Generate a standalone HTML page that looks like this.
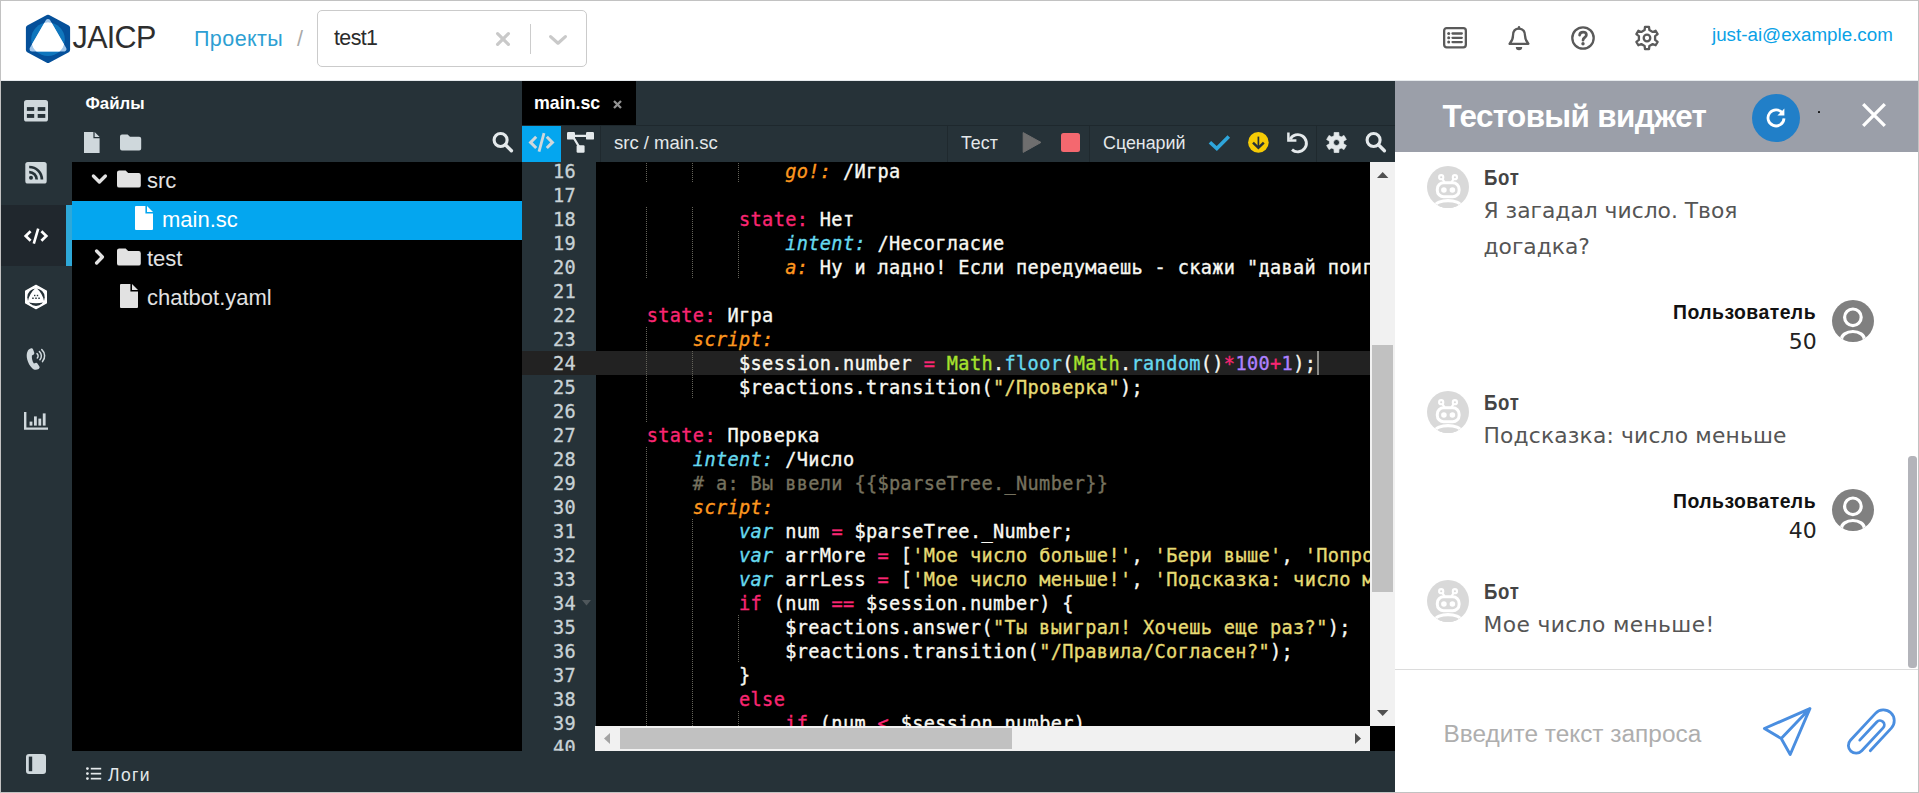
<!DOCTYPE html>
<html lang="ru">
<head>
<meta charset="utf-8">
<title>JAICP</title>
<style>
*{box-sizing:border-box;margin:0;padding:0}
html,body{width:1919px;height:793px;overflow:hidden;background:#fff}
body{position:relative;font-family:"Liberation Sans",sans-serif;color:#222}
.abs{position:absolute}
.t{position:absolute;white-space:nowrap;line-height:1}
svg{position:absolute;overflow:visible}
#frame{position:absolute;left:0;top:0;width:1919px;height:793px;border:1px solid #c2c2c2;pointer-events:none;z-index:50}
/* header */
#hdr{left:1px;top:1px;width:1917px;height:80px;background:#fff}
/* dark */
#dark{left:1px;top:81px;width:1394px;height:711px;background:#263238}
#navact{left:1px;top:205px;width:71px;height:61px;background:#20272d}
#navbar{left:66px;top:205px;width:6px;height:61px;background:#2ea8d8}
#tree{left:72px;top:162px;width:450px;height:589px;background:#000}
#sel{left:72px;top:201px;width:450px;height:39px;background:#04a6ef}
.tr{font-size:22px;color:#e2e2e2}
/* editor */
#tab{left:522px;top:81px;width:114px;height:44px;background:#000}
#tbline{left:522px;top:125px;width:873px;height:1px;background:#1e282d}
#codebtn{left:522px;top:126px;width:39px;height:36px;background:#04a6ef}
.sep{position:absolute;top:126px;width:1px;height:36px;background:#1f292e}
.tb{font-size:18px;color:#e4e8ea}
#code{left:596px;top:162px;width:774px;height:564px;background:#000;overflow:hidden}
#gut{left:522px;top:162px;width:74px;height:589px;background:#263238;overflow:hidden}
#vs{left:1370px;top:162px;width:25px;height:564px;background:#f1f1f1}
#vst{left:1372px;top:345px;width:21px;height:247px;background:#c1c1c1}
#hs{left:595px;top:726px;width:775px;height:25px;background:#f1f1f1}
#hst{left:620px;top:728px;width:392px;height:21px;background:#c1c1c1}
#corner{left:1370px;top:726px;width:25px;height:25px;background:#000}
/* widget */
#wh{left:1395px;top:81px;width:523px;height:71px;background:#9b9fa9}
#wb{left:1395px;top:152px;width:523px;height:640px;background:#fff}

.wname{font-size:18.6px;font-weight:700;color:#444;letter-spacing:.7px;transform:scaleY(1.145);transform-origin:0 84.6%}
.wtxt{font-family:"DejaVu Sans","Liberation Sans",sans-serif;font-size:21.8px;color:#555}
.wuser{font-size:19.4px;font-weight:700;color:#111;letter-spacing:.45px;transform:scaleY(1.045);transform-origin:0 84.6%}
.wnum{font-family:"DejaVu Sans","Liberation Sans",sans-serif;font-size:22px;color:#222}
/*EDCSS*/
.cl{position:absolute;left:4.5px;-webkit-text-stroke:.35px;margin-top:1px;letter-spacing:0.348px;white-space:pre;font-family:"DejaVu Sans Mono","Liberation Mono",monospace;font-size:18.6px;line-height:24px;height:24px;color:#f8f8f2}
.gn{position:absolute;right:20px;-webkit-text-stroke:.3px;margin-top:1px;letter-spacing:0.348px;white-space:pre;font-family:"DejaVu Sans Mono","Liberation Mono",monospace;font-size:18.6px;line-height:24px;height:24px;color:#c9d2d6}
.ig{position:absolute;width:1px;height:24px;background:repeating-linear-gradient(to bottom,#64635a 0,#64635a 1px,transparent 1px,transparent 2px)}
/*EDCSSEND*/
</style>
</head>
<body>
<div id="hdr" class="abs"></div>
<div id="dark" class="abs"></div>
<div class="abs" style="left:1px;top:80px;width:1917px;height:1px;background:#e6eaed"></div>

<svg class="abs" style="left:0;top:0" width="80" height="80" viewBox="0 0 80 80">
 <defs><clipPath id="lc"><circle cx="48" cy="39.3" r="16.8"/></clipPath></defs>
 <path d="M48 17.25 L67.6 27.650000000000002 L67.6 50.05 L48 60.45 L28.4 50.05 L28.4 27.650000000000002 Z" fill="#05509a" stroke="#05509a" stroke-width="5" stroke-linejoin="round"/>
 <circle cx="48" cy="39.3" r="16.8" fill="#0f76bd"/>
 <path d="M48 21.5 L63.9 49 L32.1 49 Z" fill="#a3c8ec" stroke="#a3c8ec" stroke-width="5" stroke-linejoin="round"/>
 <path d="M48 21.5 L63.9 49 L32.1 49 Z" fill="#fff" stroke="#fff" stroke-width="5" stroke-linejoin="round" clip-path="url(#lc)"/>
</svg>
<div class="t" style="left:72.6px;top:21.7px;font-size:30.5px;letter-spacing:-.7px;color:#2e2e2e">JAICP</div>
<div class="t" style="left:194px;top:29px;font-size:21.5px;letter-spacing:.42px;color:#2e9fd3">Проекты</div>
<div class="t" style="left:297px;top:29px;font-size:21.5px;color:#a9a9a9">/</div>
<div class="abs" style="left:317px;top:10px;width:270px;height:57px;border:1px solid #cbcbcb;border-radius:5px;background:#fff"></div>
<div class="t" style="left:334px;top:28px;font-size:21.4px;letter-spacing:-.6px;color:#2b2b2b">test1</div>
<svg style="left:496px;top:32px" width="14" height="14" viewBox="0 0 14 14"><path d="M1.6 1.6 L12.4 12.4 M12.4 1.6 L1.6 12.4" stroke="#c9c9c9" stroke-width="3.2" stroke-linecap="round" fill="none"/></svg>
<div class="abs" style="left:530px;top:24px;width:1px;height:30px;background:#cccccc"></div>
<svg style="left:549px;top:35px" width="18" height="10" viewBox="0 0 18 10"><path d="M1.6 1.6 L9 8.2 L16.4 1.6" stroke="#c9c9c9" stroke-width="3.2" stroke-linecap="round" stroke-linejoin="round" fill="none"/></svg>
<!-- right icons -->
<svg style="left:1443px;top:27px" width="24" height="22" viewBox="0 0 24 22" fill="none" stroke="#5a5a5a">
 <rect x="1.15" y="1.15" width="21.7" height="19.2" rx="2.5" stroke-width="2.3"/>
 <path d="M9.5 6.5H18.8M9.5 10.8H18.8M9.5 15.1H18.8" stroke-width="2.3" stroke-linecap="round"/>
 <circle cx="5.7" cy="6.5" r="1.5" fill="#5a5a5a" stroke="none"/><circle cx="5.7" cy="10.8" r="1.5" fill="#5a5a5a" stroke="none"/><circle cx="5.7" cy="15.1" r="1.5" fill="#5a5a5a" stroke="none"/>
</svg>
<svg style="left:1507px;top:25px" width="24" height="26" viewBox="0 0 24 26" fill="none" stroke="#5a5a5a">
 <path d="M12 2.2 V3.2" stroke-width="2.4" stroke-linecap="round"/>
 <path d="M12 3.6 C7.6 3.6 6 7 6 10.5 C6 15 4.6 16.6 2.6 18.8 H21.4 C19.4 16.6 18 15 18 10.5 C18 7 16.4 3.6 12 3.6 Z" stroke-width="2.3" stroke-linejoin="round"/>
 <path d="M8.8 22 A3.2 3.2 0 0 0 15.2 22 Z" fill="#5a5a5a" stroke="none"/>
</svg>
<svg style="left:1570px;top:25px" width="26" height="26" viewBox="0 0 26 26" fill="none" stroke="#5a5a5a">
 <circle cx="13" cy="13" r="10.7" stroke-width="2.3"/>
 <path d="M9.6 10.2 C9.8 8.2 11.2 7.2 13.1 7.2 C15 7.2 16.4 8.4 16.4 10 C16.4 12.4 13 12.4 13 15.2" stroke-width="2.7" stroke-linecap="round" stroke-linejoin="round"/>
 <circle cx="13" cy="18.7" r="1.7" fill="#5a5a5a" stroke="none"/>
</svg>
<svg style="left:1634px;top:25px" width="26" height="26" viewBox="0 0 26 26" fill="none" stroke="#5a5a5a">
 <path d="M10.60 5.05 L11.00 1.88 L15.00 1.88 L15.40 5.05 L18.68 6.95 L21.63 5.71 L23.63 9.17 L21.08 11.10 L21.08 14.90 L23.63 16.83 L21.63 20.29 L18.68 19.05 L15.40 20.95 L15.00 24.12 L11.00 24.12 L10.60 20.95 L7.32 19.05 L4.37 20.29 L2.37 16.83 L4.92 14.90 L4.92 11.10 L2.37 9.17 L4.37 5.71 L7.32 6.95 Z" stroke-width="2.3" stroke-linejoin="round"/>
 <circle cx="13" cy="13" r="3.3" stroke-width="2.3"/>
</svg>
<div class="t" style="left:1712px;top:25.5px;font-size:18.8px;color:#0aa1e6">just-ai@example.com</div>


<div id="navact" class="abs"></div><div id="navbar" class="abs"></div>
<!-- table icon -->
<svg style="left:24px;top:100px" width="24" height="22" viewBox="0 0 24 22"><rect x="0" y="0" width="24" height="21.6" rx="2.6" fill="#cfd8dc"/>
<g fill="#263238"><rect x="2.9" y="7.1" width="7.3" height="3.8"/><rect x="13.7" y="7.1" width="7.6" height="3.8"/><rect x="2.9" y="14" width="7.3" height="3.9"/><rect x="13.7" y="14" width="7.6" height="3.9"/></g></svg>
<!-- rss icon -->
<svg style="left:25px;top:162px" width="22" height="22" viewBox="0 0 22 22"><rect x="0.3" y="0" width="21.4" height="21.6" rx="2.6" fill="#cfd8dc"/>
<g fill="none" stroke="#263238" stroke-width="2.7" stroke-linecap="butt"><path d="M4.2 5 A12.6 12.6 0 0 1 16.9 17.6"/><path d="M4.2 10.2 A7.4 7.4 0 0 1 11.7 17.6"/></g><circle cx="6" cy="15.8" r="2" fill="#263238"/></svg>
<!-- code icon -->
<svg style="left:23px;top:227px" width="26" height="18" viewBox="0 0 26 18" fill="none" stroke="#fff" stroke-width="2.7" stroke-linejoin="miter"><path d="M7.6 4.2 L2.7 9 L7.6 13.8"/><path d="M18.4 4.2 L23.3 9 L18.4 13.8"/><path d="M15.2 1.6 L10.8 16.6" stroke-width="2.6"/></svg>
<!-- hex icon -->
<svg style="left:24px;top:284px" width="24" height="26" viewBox="0 0 24 26"><path d="M12 1.4 L22.3 7.2 L22.3 18.9 L12 24.6 L1.7 18.9 L1.7 7.2 Z" fill="#fff" stroke="#fff" stroke-width="1.4" stroke-linejoin="round"/>
<circle cx="12" cy="13.2" r="8.7" fill="#263238"/>
<path d="M12 5 Q17.6 10 19 17.4 Q12 19 5 17.4 Q6.4 10 12 5 Z" fill="#fff" stroke="#fff" stroke-width="2.2" stroke-linejoin="round"/>
<g fill="#263238"><rect x="10" y="10.8" width="1.4" height="1.4"/><rect x="12.8" y="10.8" width="1.4" height="1.4"/><rect x="8.2" y="13.5" width="1.5" height="1.5"/><rect x="11.25" y="13.5" width="1.5" height="1.5"/><rect x="14.3" y="13.5" width="1.5" height="1.5"/></g></svg>
<!-- phone icon -->
<svg style="left:23.8px;top:345.6px" width="22" height="25" viewBox="0 0 22 25"><path d="M6.6 2.6 C7.6 2 8.6 2.2 9 3.2 L10.2 6.6 C10.5 7.5 10.2 8.2 9.4 8.7 L7.9 9.6 C7.6 12 8.3 15.4 9.9 17.6 L11.5 17 C12.4 16.7 13.1 16.9 13.6 17.7 L15.4 20.6 C15.9 21.5 15.6 22.4 14.7 22.9 C12.7 24 10.2 24.2 8.2 22.2 C3.4 17.4 1.4 9.4 3.6 5.2 C4.2 4 5.2 3.2 6.6 2.6 Z" fill="#cfd8dc"/>
<g fill="none" stroke="#cfd8dc" stroke-width="1.5" stroke-linecap="round"><path d="M13 7.6 A3 3 0 0 1 13.3 12"/><path d="M15.4 5.6 A5.8 5.8 0 0 1 15.9 13.8"/><path d="M17.8 3.6 A8.6 8.6 0 0 1 18.5 15.6"/></g></svg>
<!-- chart icon -->
<svg style="left:24px;top:412px" width="24" height="18" viewBox="0 0 24 18"><path d="M1.2 0 V16.6 H24" fill="none" stroke="#cfd8dc" stroke-width="2.4"/>
<g fill="#cfd8dc"><rect x="5.6" y="9.6" width="2.8" height="4"/><rect x="10" y="4.4" width="2.8" height="9.2"/><rect x="14.4" y="6.6" width="2.8" height="7"/><rect x="18.8" y="1.4" width="2.8" height="12.2"/></g></svg>
<!-- collapse icon -->
<svg style="left:26px;top:754px" width="20" height="20" viewBox="0 0 20 20"><rect x="0" y="0" width="20" height="20" rx="3" fill="#cfd8dc"/><rect x="2.8" y="2.6" width="3.4" height="14.6" fill="#263238"/></svg>


<div class="t" style="left:85.5px;top:96px;font-size:16.8px;font-weight:700;color:#fff">Файлы</div>
<!-- new file -->
<svg style="left:84px;top:132px" width="16" height="21" viewBox="0 0 16 21"><path d="M0 0 H9.4 V6.2 H15.6 V21 H0 Z" fill="#cfd8dc"/><path d="M10.6 0 L15.6 5 H10.6 Z" fill="#cfd8dc"/></svg>
<!-- new folder -->
<svg style="left:120px;top:134px" width="22" height="17" viewBox="0 0 22 17"><path d="M2 0.4 H7.6 L10 2.8 H19.2 A2 2 0 0 1 21.2 4.8 V14.4 A2 2 0 0 1 19.2 16.4 H2 A2 2 0 0 1 0 14.4 V2.4 A2 2 0 0 1 2 0.4 Z" fill="#cfd8dc"/></svg>
<!-- search -->
<svg style="left:492px;top:131px" width="22" height="22" viewBox="0 0 22 22" fill="none" stroke="#e4e9eb"><circle cx="8.6" cy="9" r="6.5" stroke-width="3.1"/><path d="M13.4 13.8 L19.4 19.8" stroke-width="3.4" stroke-linecap="round"/></svg>
<div id="tree" class="abs"></div><div id="sel" class="abs"></div>
<!-- src row -->
<svg style="left:91px;top:174px" width="17" height="11" viewBox="0 0 17 11"><path d="M2.4 2 L8.4 8 L14.4 2" fill="none" stroke="#e2e2e2" stroke-width="3.3" stroke-linecap="round" stroke-linejoin="round"/></svg>
<svg style="left:117px;top:170px" width="24" height="18" viewBox="0 0 24 18"><path d="M2.2 0.4 H8.6 L11.2 3 H21.6 A2.2 2.2 0 0 1 23.8 5.2 V15.4 A2.2 2.2 0 0 1 21.6 17.6 H2.2 A2.2 2.2 0 0 1 0 15.4 V2.6 A2.2 2.2 0 0 1 2.2 0.4 Z" fill="#e2e2e2"/></svg>
<div class="t tr" style="left:147px;top:170px">src</div>
<!-- main.sc row -->
<svg style="left:135px;top:206px" width="18" height="24" viewBox="0 0 18 24"><path d="M1 0 H10.4 V7.4 H18 V23 A1 1 0 0 1 17 24 H1 A1 1 0 0 1 0 23 V1 A1 1 0 0 1 1 0 Z" fill="#fff"/><path d="M12 0 L18 6 H12 Z" fill="#fff"/></svg>
<div class="t tr" style="left:162px;top:209px;color:#fff">main.sc</div>
<!-- test row -->
<svg style="left:93.8px;top:249px" width="12" height="16" viewBox="0 0 12 16"><path d="M2.6 2 L8.4 8 L2.6 14" fill="none" stroke="#e2e2e2" stroke-width="3.3" stroke-linecap="round" stroke-linejoin="round"/></svg>
<svg style="left:117px;top:248px" width="24" height="18" viewBox="0 0 24 18"><path d="M2.2 0.4 H8.6 L11.2 3 H21.6 A2.2 2.2 0 0 1 23.8 5.2 V15.4 A2.2 2.2 0 0 1 21.6 17.6 H2.2 A2.2 2.2 0 0 1 0 15.4 V2.6 A2.2 2.2 0 0 1 2.2 0.4 Z" fill="#e2e2e2"/></svg>
<div class="t tr" style="left:147px;top:248px">test</div>
<!-- chatbot row -->
<svg style="left:120px;top:284px" width="18" height="24" viewBox="0 0 18 24"><path d="M1 0 H10.4 V7.4 H18 V23 A1 1 0 0 1 17 24 H1 A1 1 0 0 1 0 23 V1 A1 1 0 0 1 1 0 Z" fill="#e2e2e2"/><path d="M12 0 L18 6 H12 Z" fill="#e2e2e2"/></svg>
<div class="t tr" style="left:147px;top:287px">chatbot.yaml</div>
<!-- logs -->
<svg style="left:86px;top:767px" width="16" height="14" viewBox="0 0 16 14"><g fill="#e4e9eb"><circle cx="1.4" cy="1.6" r="1.4"/><circle cx="1.4" cy="6.6" r="1.4"/><circle cx="1.4" cy="11.6" r="1.4"/><rect x="4.8" y="0.8" width="10.4" height="1.7"/><rect x="4.8" y="5.8" width="10.4" height="1.7"/><rect x="4.8" y="10.8" width="10.4" height="1.7"/></g></svg>
<div class="t" style="left:108px;top:766.8px;font-size:17.5px;letter-spacing:1.4px;color:#e4e9eb">Логи</div>


<div id="tab" class="abs"></div>
<div class="t" style="left:534px;top:95px;font-size:17.8px;font-weight:700;color:#fff">main.sc</div>
<svg style="left:613px;top:100px" width="9" height="9" viewBox="0 0 9 9"><path d="M1 1 L8 8 M8 1 L1 8" stroke="#939393" stroke-width="2.3" fill="none"/></svg>
<div id="tbline" class="abs"></div>
<div id="codebtn" class="abs"></div>
<svg style="left:528px;top:132px" width="27" height="21" viewBox="0 0 27 21" fill="none" stroke="#cfd8dc" stroke-width="3" stroke-linejoin="miter"><path d="M8.2 4.8 L2.6 10.4 L8.2 16"/><path d="M18.8 4.8 L24.4 10.4 L18.8 16"/><path d="M16 1.2 L11 19.6" stroke-width="2.8"/></svg>
<!-- diagram icon -->
<svg style="left:567px;top:132px" width="27" height="21" viewBox="0 0 27 21"><g fill="#e4e9eb"><rect x="0" y="0" width="8" height="7.6" rx="1.2"/><rect x="19" y="0" width="8" height="7.6" rx="1.2"/><rect x="9.6" y="13.2" width="8" height="7.6" rx="1.2"/></g><path d="M8 3.8 H19 M6.2 5 L12.6 15.6" stroke="#e4e9eb" stroke-width="2.2" fill="none"/></svg>
<div class="sep" style="left:600px"></div>
<div class="t tb" style="left:614px;top:134px;font-size:18.5px">src / main.sc</div>
<div class="sep" style="left:947px"></div>
<div class="t tb" style="left:961px;top:135px;font-size:17.8px">Тест</div>
<svg style="left:1022px;top:132px" width="20" height="21" viewBox="0 0 20 21"><path d="M1.2 0.6 L19 10.4 L1.2 20.4 Z" fill="#6e6e6e" stroke="#6e6e6e" stroke-width="1" stroke-linejoin="round"/></svg>
<div class="abs" style="left:1061px;top:133px;width:19px;height:19px;border-radius:2.5px;background:#f4686f"></div>
<div class="sep" style="left:1089px"></div>
<div class="t tb" style="left:1103px;top:135px;font-size:17.85px">Сценарий</div>
<svg style="left:1208px;top:134px" width="23" height="17" viewBox="0 0 23 17"><path d="M1.9 8.2 L8.8 14.6 L20.8 2.4" fill="none" stroke="#2ea6dc" stroke-width="3.6" stroke-linejoin="miter"/></svg>
<svg style="left:1247px;top:131px" width="23" height="23" viewBox="0 0 23 23"><circle cx="11.4" cy="11.4" r="10.3" fill="#f6cb05"/><path d="M11.4 5.6 V16" fill="none" stroke="#263238" stroke-width="1.7"/><path d="M6 11.6 L11.4 16.8 L16.8 11.6" fill="none" stroke="#263238" stroke-width="2.5" stroke-linejoin="miter"/></svg>
<svg style="left:1286px;top:131px" width="23" height="23" viewBox="0 0 23 23"><path d="M4.2 8.2 A8.6 8.6 0 1 1 6 18.6" fill="none" stroke="#e4e9eb" stroke-width="2.9"/><path d="M2.4 1.4 V9.4 H10.4" fill="none" stroke="#e4e9eb" stroke-width="2.5" stroke-linejoin="miter"/></svg>
<div class="sep" style="left:1316px"></div>
<svg style="left:1325.7px;top:132.3px" width="21" height="21" viewBox="0 0 21 21"><path d="M8.06 3.73 L8.15 0.47 L12.85 0.47 L12.94 3.73 L15.15 5.00 L18.01 3.45 L20.36 7.52 L17.59 9.22 L17.59 11.78 L20.36 13.48 L18.01 17.55 L15.15 16.00 L12.94 17.27 L12.85 20.53 L8.15 20.53 L8.06 17.27 L5.85 16.00 L2.99 17.55 L0.64 13.48 L3.41 11.78 L3.41 9.22 L0.64 7.52 L2.99 3.45 L5.85 5.00 Z M10.5 7.5 A3 3 0 1 0 10.5 13.5 A3 3 0 1 0 10.5 7.5 Z" fill="#e4e9eb" fill-rule="evenodd" stroke="#e4e9eb" stroke-width=".7" stroke-linejoin="round"/></svg>
<svg style="left:1365px;top:131px" width="22" height="22" viewBox="0 0 22 22" fill="none" stroke="#e4e9eb"><circle cx="8.6" cy="9" r="6.5" stroke-width="3.1"/><path d="M13.4 13.8 L19.4 19.8" stroke-width="3.4" stroke-linecap="round"/></svg>
<!--CODE-START--><div id="code" class="abs">
<div class="abs" style="left:0;top:189px;width:774px;height:24px;background:#222222"></div>
<div class="ig" style="left:49.7px;top:-3px"></div>
<div class="ig" style="left:95.9px;top:-3px"></div>
<div class="ig" style="left:142.1px;top:-3px"></div>
<div class="ig" style="left:49.7px;top:45px"></div>
<div class="ig" style="left:95.9px;top:45px"></div>
<div class="ig" style="left:49.7px;top:69px"></div>
<div class="ig" style="left:95.9px;top:69px"></div>
<div class="ig" style="left:142.1px;top:69px"></div>
<div class="ig" style="left:49.7px;top:93px"></div>
<div class="ig" style="left:95.9px;top:93px"></div>
<div class="ig" style="left:142.1px;top:93px"></div>
<div class="ig" style="left:49.7px;top:165px"></div>
<div class="ig" style="left:49.7px;top:189px"></div>
<div class="ig" style="left:95.9px;top:189px"></div>
<div class="ig" style="left:49.7px;top:213px"></div>
<div class="ig" style="left:95.9px;top:213px"></div>
<div class="ig" style="left:49.7px;top:237px"></div>
<div class="ig" style="left:49.7px;top:285px"></div>
<div class="ig" style="left:49.7px;top:309px"></div>
<div class="ig" style="left:49.7px;top:333px"></div>
<div class="ig" style="left:49.7px;top:357px"></div>
<div class="ig" style="left:95.9px;top:357px"></div>
<div class="ig" style="left:49.7px;top:381px"></div>
<div class="ig" style="left:95.9px;top:381px"></div>
<div class="ig" style="left:49.7px;top:405px"></div>
<div class="ig" style="left:95.9px;top:405px"></div>
<div class="ig" style="left:49.7px;top:429px"></div>
<div class="ig" style="left:95.9px;top:429px"></div>
<div class="ig" style="left:49.7px;top:453px"></div>
<div class="ig" style="left:95.9px;top:453px"></div>
<div class="ig" style="left:142.1px;top:453px"></div>
<div class="ig" style="left:49.7px;top:477px"></div>
<div class="ig" style="left:95.9px;top:477px"></div>
<div class="ig" style="left:142.1px;top:477px"></div>
<div class="ig" style="left:49.7px;top:501px"></div>
<div class="ig" style="left:95.9px;top:501px"></div>
<div class="ig" style="left:49.7px;top:525px"></div>
<div class="ig" style="left:95.9px;top:525px"></div>
<div class="ig" style="left:49.7px;top:549px"></div>
<div class="ig" style="left:95.9px;top:549px"></div>
<div class="ig" style="left:142.1px;top:549px"></div>
<div class="cl" style="top:-3px"><span style="color:#f8f8f2">                </span><span style="color:#fd971f;font-style:italic">go!:</span><span style="color:#f8f8f2"> /Игра</span></div>
<div class="cl" style="top:45px"><span style="color:#f8f8f2">            </span><span style="color:#f92672">state:</span><span style="color:#f8f8f2"> Нет</span></div>
<div class="cl" style="top:69px"><span style="color:#f8f8f2">                </span><span style="color:#66d9ef;font-style:italic">intent:</span><span style="color:#f8f8f2"> /Несогласие</span></div>
<div class="cl" style="top:93px"><span style="color:#f8f8f2">                </span><span style="color:#fd971f;font-style:italic">a:</span><span style="color:#f8f8f2"> Ну и ладно! Если передумаешь - скажи "давай поиграем"</span></div>
<div class="cl" style="top:141px"><span style="color:#f8f8f2">    </span><span style="color:#f92672">state:</span><span style="color:#f8f8f2"> Игра</span></div>
<div class="cl" style="top:165px"><span style="color:#f8f8f2">        </span><span style="color:#fd971f;font-style:italic">script:</span></div>
<div class="cl" style="top:189px"><span style="color:#f8f8f2">            </span><span style="color:#f8f8f2">$session.number </span><span style="color:#f92672">=</span><span style="color:#f8f8f2"> </span><span style="color:#a6e22e">Math</span><span style="color:#f8f8f2">.</span><span style="color:#66d9ef">floor</span><span style="color:#f8f8f2">(</span><span style="color:#a6e22e">Math</span><span style="color:#f8f8f2">.</span><span style="color:#66d9ef">random</span><span style="color:#f8f8f2">()</span><span style="color:#f92672">*</span><span style="color:#ae81ff">100</span><span style="color:#f92672">+</span><span style="color:#ae81ff">1</span><span style="color:#f8f8f2">);</span></div>
<div class="cl" style="top:213px"><span style="color:#f8f8f2">            </span><span style="color:#f8f8f2">$reactions.transition(</span><span style="color:#e6db74">"/Проверка"</span><span style="color:#f8f8f2">);</span></div>
<div class="cl" style="top:261px"><span style="color:#f8f8f2">    </span><span style="color:#f92672">state:</span><span style="color:#f8f8f2"> Проверка</span></div>
<div class="cl" style="top:285px"><span style="color:#f8f8f2">        </span><span style="color:#66d9ef;font-style:italic">intent:</span><span style="color:#f8f8f2"> /Число</span></div>
<div class="cl" style="top:309px"><span style="color:#f8f8f2">        </span><span style="color:#75715e"># a: Вы ввели {{$parseTree._Number}}</span></div>
<div class="cl" style="top:333px"><span style="color:#f8f8f2">        </span><span style="color:#fd971f;font-style:italic">script:</span></div>
<div class="cl" style="top:357px"><span style="color:#f8f8f2">            </span><span style="color:#66d9ef;font-style:italic">var</span><span style="color:#f8f8f2"> num </span><span style="color:#f92672">=</span><span style="color:#f8f8f2"> $parseTree._Number;</span></div>
<div class="cl" style="top:381px"><span style="color:#f8f8f2">            </span><span style="color:#66d9ef;font-style:italic">var</span><span style="color:#f8f8f2"> arrMore </span><span style="color:#f92672">=</span><span style="color:#f8f8f2"> [</span><span style="color:#e6db74">'Мое число больше!'</span><span style="color:#f8f8f2">, </span><span style="color:#e6db74">'Бери выше'</span><span style="color:#f8f8f2">, </span><span style="color:#e6db74">'Попробуй число побольше'</span><span style="color:#f8f8f2">];</span></div>
<div class="cl" style="top:405px"><span style="color:#f8f8f2">            </span><span style="color:#66d9ef;font-style:italic">var</span><span style="color:#f8f8f2"> arrLess </span><span style="color:#f92672">=</span><span style="color:#f8f8f2"> [</span><span style="color:#e6db74">'Мое число меньше!'</span><span style="color:#f8f8f2">, </span><span style="color:#e6db74">'Подсказка: число меньше'</span><span style="color:#f8f8f2">, </span><span style="color:#e6db74">'Бери ниже'</span><span style="color:#f8f8f2">];</span></div>
<div class="cl" style="top:429px"><span style="color:#f8f8f2">            </span><span style="color:#f92672">if</span><span style="color:#f8f8f2"> (num </span><span style="color:#f92672">==</span><span style="color:#f8f8f2"> $session.number) {</span></div>
<div class="cl" style="top:453px"><span style="color:#f8f8f2">                </span><span style="color:#f8f8f2">$reactions.answer(</span><span style="color:#e6db74">"Ты выиграл! Хочешь еще раз?"</span><span style="color:#f8f8f2">);</span></div>
<div class="cl" style="top:477px"><span style="color:#f8f8f2">                </span><span style="color:#f8f8f2">$reactions.transition(</span><span style="color:#e6db74">"/Правила/Согласен?"</span><span style="color:#f8f8f2">);</span></div>
<div class="cl" style="top:501px"><span style="color:#f8f8f2">            </span><span style="color:#f8f8f2">}</span></div>
<div class="cl" style="top:525px"><span style="color:#f8f8f2">            </span><span style="color:#f92672">else</span></div>
<div class="cl" style="top:549px"><span style="color:#f8f8f2">                </span><span style="color:#f92672">if</span><span style="color:#f8f8f2"> (num </span><span style="color:#f92672">&lt;</span><span style="color:#f8f8f2"> $session.number)</span></div>
<div class="abs" style="left:720.9px;top:189px;width:2px;height:24px;background:#8c8c88"></div>
</div>
<div id="gut" class="abs">
<div class="abs" style="left:0;top:189px;width:74px;height:24px;background:#222222"></div>
<div class="gn" style="top:-3px">16</div>
<div class="gn" style="top:21px">17</div>
<div class="gn" style="top:45px">18</div>
<div class="gn" style="top:69px">19</div>
<div class="gn" style="top:93px">20</div>
<div class="gn" style="top:117px">21</div>
<div class="gn" style="top:141px">22</div>
<div class="gn" style="top:165px">23</div>
<div class="gn" style="top:189px">24</div>
<div class="gn" style="top:213px">25</div>
<div class="gn" style="top:237px">26</div>
<div class="gn" style="top:261px">27</div>
<div class="gn" style="top:285px">28</div>
<div class="gn" style="top:309px">29</div>
<div class="gn" style="top:333px">30</div>
<div class="gn" style="top:357px">31</div>
<div class="gn" style="top:381px">32</div>
<div class="gn" style="top:405px">33</div>
<div class="gn" style="top:429px">34</div>
<div class="gn" style="top:453px">35</div>
<div class="gn" style="top:477px">36</div>
<div class="gn" style="top:501px">37</div>
<div class="gn" style="top:525px">38</div>
<div class="gn" style="top:549px">39</div>
<div class="gn" style="top:573px">40</div>
<svg style="left:60px;top:438px" width="9" height="6" viewBox="0 0 9 6"><path d="M0 0 H9 L4.5 5.4 Z" fill="#4f575b"/></svg>
</div><!--CODE-END-->
<div id="vs" class="abs"></div><div id="vst" class="abs"></div>
<svg style="left:1377px;top:172px" width="12" height="6" viewBox="0 0 12 6"><path d="M0 6 L5.7 0 L11.4 6 Z" fill="#505050"/></svg>
<svg style="left:1377px;top:710px" width="12" height="6" viewBox="0 0 12 6"><path d="M0 0 L5.7 6 L11.4 0 Z" fill="#505050"/></svg>
<div id="hs" class="abs"></div><div id="hst" class="abs"></div>
<svg style="left:604px;top:733px" width="6" height="11" viewBox="0 0 6 11"><path d="M6 0 L0 5.5 L6 11 Z" fill="#a3a3a3"/></svg>
<svg style="left:1355px;top:733px" width="6" height="11" viewBox="0 0 6 11"><path d="M0 0 L6 5.5 L0 11 Z" fill="#505050"/></svg>
<div id="corner" class="abs"></div>


<div id="wh" class="abs"></div><div id="wb" class="abs"></div>
<div class="t" style="left:1442.5px;top:100.5px;font-size:31.4px;letter-spacing:-.62px;font-weight:700;color:#fff">Тестовый виджет</div>
<div class="abs" style="left:1752px;top:94px;width:48px;height:48px;border-radius:50%;background:#217fc8"></div>
<svg style="left:1764px;top:106px" width="24" height="24" viewBox="0 0 24 24"><path d="M18.6 7.4 A8 8 0 1 0 20 12.4" fill="none" stroke="#fff" stroke-width="2.8"/><path d="M20.4 2.6 V9.6 H13.4 Z" fill="#fff"/></svg>
<div class="abs" style="left:1818.2px;top:111.2px;width:1.7px;height:1.7px;border-radius:50%;background:#111"></div>
<svg style="left:1862px;top:103px" width="24" height="24" viewBox="0 0 24 24"><path d="M1.2 1.2 L22.8 22.8 M22.8 1.2 L1.2 22.8" stroke="#fff" stroke-width="3.3" fill="none"/></svg>
<svg style="left:1427px;top:166px" width="42" height="42" viewBox="0 0 42 42"><defs><clipPath id="bc166"><circle cx="21" cy="21" r="21"/></clipPath></defs><circle cx="21" cy="21" r="21" fill="#d9d9d9"/>
<g clip-path="url(#bc166)" fill="none" stroke="#fff"><ellipse cx="21" cy="39.8" rx="12.6" ry="5.2" stroke-width="3.2" fill="#d9d9d9"/></g>
<g fill="none" stroke="#fff"><rect x="10.3" y="16.8" width="21.8" height="14" rx="6.4" stroke-width="3"/><path d="M15.4 13 L17.6 16.4 M26.6 13 L24.4 16.4" stroke-width="2.2"/><circle cx="14.2" cy="11.2" r="2.1" stroke-width="2.1"/><circle cx="27.9" cy="11.2" r="2.1" stroke-width="2.1"/></g>
<circle cx="16.9" cy="24" r="2.8" fill="#fff"/><circle cx="25.4" cy="24" r="2.8" fill="#fff"/></svg><div class="t wname" style="left:1484px;top:170px">Бот</div><div class="t wtxt" style="left:1483.5px;top:200px">Я загадал число. Твоя</div><div class="t wtxt" style="left:1483.5px;top:236px">догадка?</div>
<svg style="left:1832px;top:300px" width="42" height="42" viewBox="0 0 42 42"><defs><clipPath id="uc300"><circle cx="21" cy="21" r="21"/></clipPath></defs><circle cx="21" cy="21" r="21" fill="#808080"/>
<g clip-path="url(#uc300)" fill="none" stroke="#fff" stroke-width="3.2"><circle cx="20.9" cy="17.3" r="8.3"/><ellipse cx="20.9" cy="39.5" rx="11.6" ry="8"/></g></svg><div class="t wuser" style="right:103px;top:303px">Пользователь</div><div class="t wnum" style="right:102.2px;top:330.5px">50</div>
<svg style="left:1427px;top:391px" width="42" height="42" viewBox="0 0 42 42"><defs><clipPath id="bc391"><circle cx="21" cy="21" r="21"/></clipPath></defs><circle cx="21" cy="21" r="21" fill="#d9d9d9"/>
<g clip-path="url(#bc391)" fill="none" stroke="#fff"><ellipse cx="21" cy="39.8" rx="12.6" ry="5.2" stroke-width="3.2" fill="#d9d9d9"/></g>
<g fill="none" stroke="#fff"><rect x="10.3" y="16.8" width="21.8" height="14" rx="6.4" stroke-width="3"/><path d="M15.4 13 L17.6 16.4 M26.6 13 L24.4 16.4" stroke-width="2.2"/><circle cx="14.2" cy="11.2" r="2.1" stroke-width="2.1"/><circle cx="27.9" cy="11.2" r="2.1" stroke-width="2.1"/></g>
<circle cx="16.9" cy="24" r="2.8" fill="#fff"/><circle cx="25.4" cy="24" r="2.8" fill="#fff"/></svg><div class="t wname" style="left:1484px;top:395px">Бот</div><div class="t wtxt" style="left:1483.5px;top:425px;letter-spacing:.17px">Подсказка: число меньше</div>
<svg style="left:1832px;top:489px" width="42" height="42" viewBox="0 0 42 42"><defs><clipPath id="uc489"><circle cx="21" cy="21" r="21"/></clipPath></defs><circle cx="21" cy="21" r="21" fill="#808080"/>
<g clip-path="url(#uc489)" fill="none" stroke="#fff" stroke-width="3.2"><circle cx="20.9" cy="17.3" r="8.3"/><ellipse cx="20.9" cy="39.5" rx="11.6" ry="8"/></g></svg><div class="t wuser" style="right:103px;top:492px">Пользователь</div><div class="t wnum" style="right:102.2px;top:519.5px">40</div>
<svg style="left:1427px;top:580px" width="42" height="42" viewBox="0 0 42 42"><defs><clipPath id="bc580"><circle cx="21" cy="21" r="21"/></clipPath></defs><circle cx="21" cy="21" r="21" fill="#d9d9d9"/>
<g clip-path="url(#bc580)" fill="none" stroke="#fff"><ellipse cx="21" cy="39.8" rx="12.6" ry="5.2" stroke-width="3.2" fill="#d9d9d9"/></g>
<g fill="none" stroke="#fff"><rect x="10.3" y="16.8" width="21.8" height="14" rx="6.4" stroke-width="3"/><path d="M15.4 13 L17.6 16.4 M26.6 13 L24.4 16.4" stroke-width="2.2"/><circle cx="14.2" cy="11.2" r="2.1" stroke-width="2.1"/><circle cx="27.9" cy="11.2" r="2.1" stroke-width="2.1"/></g>
<circle cx="16.9" cy="24" r="2.8" fill="#fff"/><circle cx="25.4" cy="24" r="2.8" fill="#fff"/></svg><div class="t wname" style="left:1484px;top:584px">Бот</div><div class="t wtxt" style="left:1483.5px;top:614px;letter-spacing:.37px">Мое число меньше!</div>
<div class="abs" style="left:1908px;top:456px;width:9px;height:212px;border-radius:3.5px;background:#b3b4ba"></div>
<div class="abs" style="left:1395px;top:669px;width:523px;height:1px;background:#dcdcdc"></div>
<div class="t" style="left:1443.6px;top:722px;font-size:24.42px;color:#aeaeae">Введите текст запроса</div>
<svg style="left:1755px;top:700px" width="70" height="65" viewBox="0 0 70 65"><path d="M54.9 8.6 L9.4 28.5 L26.2 38.5 L35.2 54.5 Z M26.2 38.5 L54.9 8.6" fill="none" stroke="#4a8ee0" stroke-width="2.9" stroke-linejoin="round" stroke-linecap="round"/></svg>
<svg style="left:1838px;top:700px" width="70" height="65" viewBox="0 0 70 65"><path d="M32.27 50.74 L53.34 28.14 A10.85 10.85 0 0 0 37.47 13.34 L12.44 40.18 A7.75 7.75 0 0 0 23.78 50.75 L45.12 27.86 A4.35 4.35 0 0 0 38.76 21.92 L21.78 40.14" fill="none" stroke="#4a8ee0" stroke-width="2.8" stroke-linecap="round"/></svg>

<div id="frame"></div>
</body>
</html>
